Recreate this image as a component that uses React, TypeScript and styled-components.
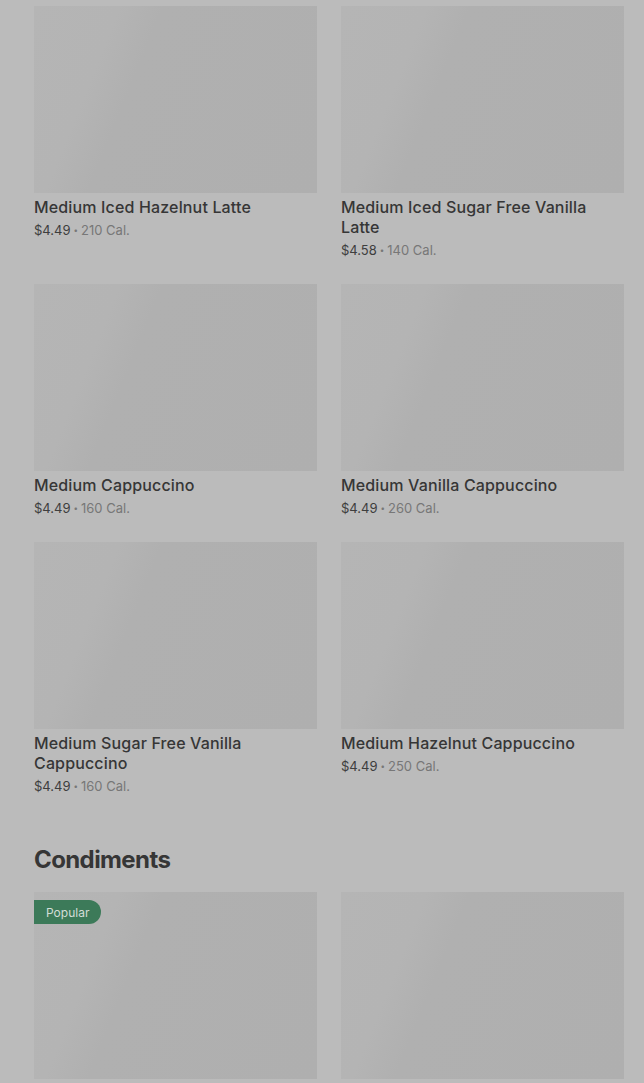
import React from "react";
import styled, { createGlobalStyle } from "styled-components";

const GlobalStyle = createGlobalStyle`
  html, body {
    margin: 0;
    padding: 0;
    background: #bbbbbb;
    font-family: Inter, "Noto Sans", sans-serif;
  }
`;

const Page = styled.div`
  padding: 6px 20px 0 34px;
  height: 1083px;
  overflow: hidden;
  box-sizing: border-box;
`;

const Grid = styled.div`
  display: grid;
  grid-template-columns: 283px 283px;
  column-gap: 24px;
  row-gap: 24px;
`;

const Card = styled.div`
  display: flex;
  flex-direction: column;
`;

const Thumb = styled.div`
  position: relative;
  height: 187px;
  background: linear-gradient(
    112deg,
    #b5b5b5 0%,
    #b4b4b4 24%,
    #b0b0b0 36%,
    #afafaf 100%
  );
  margin-bottom: 4px;
`;

const Badge = styled.span`
  position: absolute;
  top: 8px;
  left: 0;
  height: 24px;
  padding: 0 12px;
  display: flex;
  align-items: center;
  background: #3c7a59;
  color: #d3ddd7;
  font-size: 12px;
  border-radius: 0 12px 12px 0;
`;

const Title = styled.div`
  font-size: 16px;
  line-height: 20px;
  font-weight: 500;
  letter-spacing: 0.15px;
  color: #363636;
`;

const Meta = styled.div`
  margin-top: 3px;
  font-size: 13px;
  line-height: 20px;
  color: #777777;
`;

const Price = styled.span`
  color: #3e3e3e;
`;

const Dot = styled.span`
  font-size: 8px;
  vertical-align: 2px;
  margin: 0 3px;
`;

const Section = styled.h2`
  margin: 48px 0 16px;
  font-size: 24px;
  line-height: 32px;
  font-weight: 700;
  color: #363636;
  letter-spacing: -0.6px;
`;

type Item = { name: string; price?: string; cal?: string; popular?: boolean };

const drinks: Item[] = [
  { name: "Medium Iced Hazelnut Latte", price: "$4.49", cal: "210 Cal." },
  { name: "Medium Iced Sugar Free Vanilla Latte", price: "$4.58", cal: "140 Cal." },
  { name: "Medium Cappuccino", price: "$4.49", cal: "160 Cal." },
  { name: "Medium Vanilla Cappuccino", price: "$4.49", cal: "260 Cal." },
  { name: "Medium Sugar Free Vanilla Cappuccino", price: "$4.49", cal: "160 Cal." },
  { name: "Medium Hazelnut Cappuccino", price: "$4.49", cal: "250 Cal." },
];

const condiments: Item[] = [
  { name: "", popular: true },
  { name: "" },
];

function ItemCard({ item }: { item: Item }) {
  return (
    <Card>
      <Thumb>{item.popular && <Badge>Popular</Badge>}</Thumb>
      {item.name && <Title>{item.name}</Title>}
      {item.price && (
        <Meta>
          <Price>{item.price}</Price>
          <Dot>•</Dot>
          {item.cal}
        </Meta>
      )}
    </Card>
  );
}

export default function App() {
  return (
    <>
      <GlobalStyle />
      <Page>
        <Grid>
          {drinks.map((d) => (
            <ItemCard key={d.name} item={d} />
          ))}
        </Grid>
        <Section>Condiments</Section>
        <Grid>
          {condiments.map((d, i) => (
            <ItemCard key={i} item={d} />
          ))}
        </Grid>
      </Page>
    </>
  );
}
